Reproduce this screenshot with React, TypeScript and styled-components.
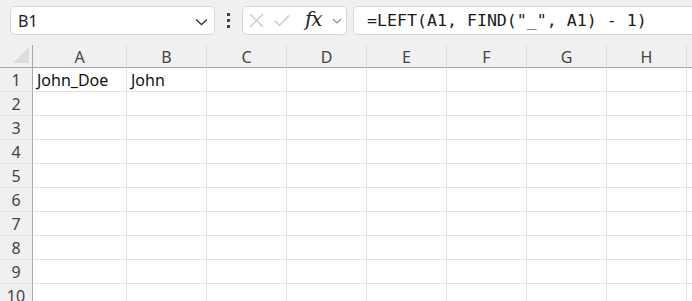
import * as React from 'react';
import styled, { createGlobalStyle } from 'styled-components';

const GlobalStyle = createGlobalStyle`
	html, body {
		margin: 0;
		padding: 0;
		background: #ffffff;
		overflow: hidden;
	}
	body {
		font-family: 'Noto Sans', 'Open Sans', sans-serif;
	}
`;

// the last column is only partly on screen, so its letter stays empty
const COLS = ['A', 'B', 'C', 'D', 'E', 'F', 'G', 'H', ''];
const ROWS = 10;

const cells: Record<string, string> = {
	A1: 'John_Doe',
	B1: 'John',
};

const App: React.FunctionComponent = () => {
	return (
		<Page>
			<GlobalStyle />
			<Toolbar>
				<NameBox>
					<NameText>B1</NameText>
					<Chevron width="13" height="8" viewBox="0 0 13 8">
						<path d="M1 1.5 L6.5 6.5 L12 1.5" fill="none" stroke="#333" strokeWidth="1.3" />
					</Chevron>
				</NameBox>
				<Dots>
					<span />
					<span />
					<span />
				</Dots>
				<FuncBox>
					<svg width="15" height="15" viewBox="0 0 15 15">
						<path d="M1 1 L14 14 M14 1 L1 14" stroke="#c4c4c4" strokeWidth="1.2" fill="none" />
					</svg>
					<svg width="16" height="13" viewBox="0 0 16 13">
						<path d="M1 7 L5.5 11.5 L15 1.5" stroke="#c4c4c4" strokeWidth="1.2" fill="none" />
					</svg>
					<Fx>fx</Fx>
					<svg width="10" height="6" viewBox="0 0 10 6">
						<path d="M1 1 L5 5 L9 1" fill="none" stroke="#8a8a8a" strokeWidth="1.1" />
					</svg>
				</FuncBox>
				<FormulaBox>=LEFT(A1, FIND("_", A1) - 1)</FormulaBox>
			</Toolbar>
			<Sheet>
				<Corner>
					<Triangle />
				</Corner>
				{COLS.map((c, i) => (
					<ColHead key={i}>{c}</ColHead>
				))}
				{Array.from({ length: ROWS }, (_, i) => i + 1).map(r => (
					<React.Fragment key={r}>
						<RowHead>{r}</RowHead>
						{COLS.map((c, i) => (
							<Cell key={i}>{cells[c + r] ?? ''}</Cell>
						))}
					</React.Fragment>
				))}
			</Sheet>
		</Page>
	);
};

export default App;

const Page = styled.div`
	width: 692px;
	height: 301px;
	overflow: hidden;
	background: #ffffff;
`;

const Toolbar = styled.div`
	height: 45px;
	box-sizing: border-box;
	background: #f0f0f0;
	display: flex;
	align-items: flex-start;
	padding: 6px 0 0 10px;
`;

const Box = styled.div`
	height: 29px;
	box-sizing: border-box;
	background: #ffffff;
	border: 1px solid #d6d6d6;
	border-radius: 5px;
	display: flex;
	align-items: center;
`;

const NameBox = styled(Box)`
	width: 205px;
	padding: 0 6px 0 7px;
	justify-content: space-between;
`;

const NameText = styled.span`
	font-size: 16px;
	color: #1a1a1a;
`;

const Chevron = styled.svg`
	margin-top: 2px;
`;

const Dots = styled.div`
	width: 27px;
	height: 29px;
	display: flex;
	flex-direction: column;
	align-items: center;
	justify-content: center;
	gap: 3px;

	span {
		width: 3px;
		height: 3px;
		background: #444;
	}
`;

const FuncBox = styled(Box)`
	width: 105px;
	padding: 0 4px 0 6px;
	justify-content: space-between;
`;

const Fx = styled.span`
	font-family: 'DejaVu Serif', 'Liberation Serif', serif;
	font-style: italic;
	font-size: 20px;
	color: #222;
	margin-top: -4px;
	margin-left: 4px;
	letter-spacing: -1px;
`;

const FormulaBox = styled(Box)`
	flex: 1;
	margin-left: 6px;
	margin-right: -10px;
	padding-left: 13px;
	font-family: 'DejaVu Sans Mono', 'Liberation Mono', monospace;
	font-size: 16.6px;
	color: #1a1a1a;
	white-space: nowrap;
`;

const Sheet = styled.div`
	display: grid;
	grid-template-columns: 33px 94px repeat(8, 80px);
	grid-auto-rows: 24px;
	grid-template-rows: 23px;
	font-size: 16px;
`;

const Corner = styled.div`
	background: #f0f0f0;
	border-right: 1px solid #a8a8a8;
	border-bottom: 1px solid #a8a8a8;
	position: relative;
`;

const Triangle = styled.div`
	position: absolute;
	right: 3px;
	bottom: 4px;
	width: 0;
	height: 0;
	border-left: 16px solid transparent;
	border-bottom: 16px solid #dcdcdc;
`;

const ColHead = styled.div`
	background: #f0f0f0;
	border-right: 1px solid #e0e0e0;
	border-bottom: 1px solid #a8a8a8;
	display: flex;
	align-items: center;
	justify-content: center;
	color: #444;
	padding-top: 1px;
`;

const RowHead = styled.div`
	background: #f0f0f0;
	border-right: 1px solid #a8a8a8;
	border-bottom: 1px solid #e4e4e4;
	display: flex;
	align-items: center;
	justify-content: center;
	color: #444;
	padding-top: 1px;
	box-sizing: border-box;
`;

const Cell = styled.div`
	border-right: 1px solid #e1e1e1;
	border-bottom: 1px solid #e1e1e1;
	display: flex;
	align-items: center;
	padding: 1px 0 0 4px;
	box-sizing: border-box;
	color: #111;
	white-space: nowrap;
`;
